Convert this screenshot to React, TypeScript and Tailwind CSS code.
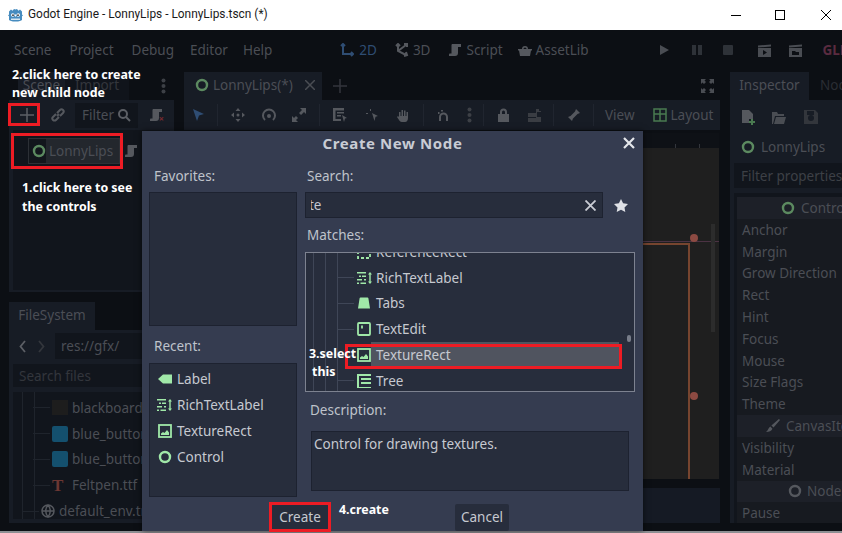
import type { ReactNode } from 'react'

const GREEN = '#a0e8a8'

function ScriptIcon({ className = '', color = '#55585e' }: { className?: string; color?: string }) {
  return (
    <svg className={className} width="14" height="14" viewBox="0 0 14 14" fill={color}>
      <path d="M4 1h9v3h-3v6c0 2-1 3-3 3H1v-1.500c0-.5.5-1 1-1h1.500V3C3.500 2 3.500 1.500 4 1z" />
    </svg>
  )
}

function ControlIcon({ color = '#5c8a60', size = 14 }: { color?: string; size?: number }) {
  return (
    <svg width={size} height={size} viewBox="0 0 14 14" fill="none" stroke={color} strokeWidth="2.400">
      <circle cx="7" cy="7" r="5" />
    </svg>
  )
}

function LabelIcon() {
  return (
    <svg width="14" height="14" viewBox="0 0 14 14" fill={GREEN}>
      <path d="M5 2.500h9v9H5L0 7z" />
    </svg>
  )
}

function RichTextIcon() {
  return (
    <svg width="15" height="14" viewBox="0 0 15 14" fill={GREEN}>
      <path d="M0 1h9v1.500H0zM2 4.500h2V6H2zM5 4.500h4V6H5zM0 8h5v1.500H0zM7 8h2v1.500H7zM0 11.500h2V13H0zM3.500 11.500H9V13H3.500z" />
      <path d="M13 1l2 2.500h-1.300v7H15L13 13l-2-2.500h1.300v-7H11z" />
    </svg>
  )
}

function TextureIcon() {
  return (
    <svg width="14" height="14" viewBox="0 0 14 14">
      <rect x="1" y="1" width="12" height="12" fill="none" stroke={GREEN} strokeWidth="1.800" />
      <path d="M3 11V9.500l2-1.500 1.500 1 2.500-3 2 2.500V11z" fill={GREEN} />
    </svg>
  )
}

function TabsIcon() {
  return (
    <svg width="14" height="14" viewBox="0 0 14 14" fill={GREEN}>
      <path d="M3.500 1.500h7c.5 0 .8.300.9.800L13 12.500H1l1.600-10.200c.1-.5.400-.8.900-.8z" />
    </svg>
  )
}

function TextEditIcon() {
  return (
    <svg width="14" height="14" viewBox="0 0 14 14" fill="none" stroke={GREEN} strokeWidth="1.800">
      <rect x="1" y="1" width="12" height="12" rx="1" />
      <path d="M5 3.500v3" />
    </svg>
  )
}

function TreeIcon() {
  return (
    <svg width="14" height="14" viewBox="0 0 14 14" fill={GREEN}>
      <path d="M0 0h14v2H2v11h12v1H0z" />
      <path d="M4 4h10v2H4zM4 8h10v2H4z" />
    </svg>
  )
}

function RefRectIcon() {
  return (
    <svg width="14" height="14" viewBox="0 0 14 14" fill="none" stroke={GREEN} strokeWidth="1.800" strokeDasharray="3 2">
      <rect x="1" y="1" width="12" height="12" />
    </svg>
  )
}

function GodotLogo() {
  return (
    <svg width="15" height="15" viewBox="0 0 15 15">
      <path d="M3 1.500l1.500 1.200L6 1l1.500.5L9 1l1.500 1.700L12 1.500l2 2v3l1 1-1 .8v3.700c-1 .8-2.500 1.500-6.500 1.500S2 12.800 1 12V8.300L0 7.500l1-1v-3z" fill="#478cbf" />
      <circle cx="4.800" cy="7" r="1.800" fill="#fff" />
      <circle cx="10.200" cy="7" r="1.800" fill="#fff" />
      <circle cx="5" cy="7.200" r="0.900" fill="#333" />
      <circle cx="10" cy="7.200" r="0.900" fill="#333" />
      <rect x="7" y="6.500" width="1" height="2" fill="#fff" />
      <path d="M3 10.500h9v1.500H3z" fill="#d5e6f2" />
    </svg>
  )
}

function MenuLabel({ children, className = '' }: { children: ReactNode; className?: string }) {
  return <span className={`text-[13.500px] text-[#4b4e55] ${className}`}>{children}</span>
}

function ToolbarSep() {
  return <div className="h-[22px] w-px bg-[#20252f]" />
}

function AddNote({ children, className }: { children: ReactNode; className: string }) {
  return <div className={`absolute text-[12.400px] font-bold text-white ${className}`}>{children}</div>
}

function RedBox({ className }: { className: string }) {
  return <div className={`pointer-events-none absolute border-[3px] border-[#ed1c24] ${className}`} />
}

function TitleBar() {
  return (
    <div className="flex h-[30px] items-center bg-white pl-[8px] text-[#1a1a1a]">
      <GodotLogo />
      <span className="ml-[5px] font-['Roboto'] text-[11.900px]">Godot Engine - LonnyLips - LonnyLips.tscn (*)</span>
      <div className="ml-auto flex items-center">
        <div className="h-px w-[10px] bg-black" />
        <div className="ml-[34px] h-[10px] w-[10px] border border-black" />
        <svg className="ml-[36px] mr-[11px]" width="10" height="10" viewBox="0 0 10 10" stroke="#000" strokeWidth="1">
          <path d="M0 0l10 10M10 0L0 10" />
        </svg>
      </div>
    </div>
  )
}

function MenuBar() {
  return (
    <div className="flex h-[42px] w-[900px] items-center pb-[2px] pl-[14px]">
      <MenuLabel>Scene</MenuLabel>
      <MenuLabel className="ml-[18px]">Project</MenuLabel>
      <MenuLabel className="ml-[18px]">Debug</MenuLabel>
      <MenuLabel className="ml-[16px]">Editor</MenuLabel>
      <MenuLabel className="ml-[15px]">Help</MenuLabel>

      <svg className="ml-[68px]" width="14" height="14" viewBox="0 0 14 14" fill="none" stroke="#2f4d73" strokeWidth="2">
        <path d="M3 1v10h10M1 3l2-2 2 2M11 9l2 2-2 2" />
      </svg>
      <MenuLabel className="ml-[5px] !text-[#2f4d73]">2D</MenuLabel>
      <svg className="ml-[18px]" width="14" height="14" viewBox="0 0 14 14" fill="none" stroke="#55585e" strokeWidth="2">
        <path d="M3 1v7l8 4M1 3l2-2 2 2M3 8l8-6M9 1h3v3M9 13l3-1-1-3" />
      </svg>
      <MenuLabel className="ml-[4px]">3D</MenuLabel>
      <ScriptIcon className="ml-[18px]" />
      <MenuLabel className="ml-[4px]">Script</MenuLabel>
      <svg className="ml-[15px]" width="14" height="14" viewBox="0 0 14 14" fill="#55585e">
        <path d="M0 6h14v1.500h-1L12 13H2L1 7.500H0zM4 6a3 3 0 0 1 6 0H8.500a1.500 1.500 0 0 0-3 0z" />
      </svg>
      <MenuLabel className="ml-[4px]">AssetLib</MenuLabel>

      <svg className="ml-[71px]" width="9" height="10" viewBox="0 0 9 10" fill="#4a4d53">
        <path d="M0 0l9 5-9 5z" />
      </svg>
      <svg className="ml-[23px]" width="10" height="10" viewBox="0 0 10 10" fill="#2e3238">
        <path d="M0 0h4v10H0zM6 0h4v10H6z" />
      </svg>
      <div className="ml-[21px] h-[10px] w-[10px] rounded-[1px] bg-[#2e3238]" />
      <svg className="ml-[24px]" width="14" height="13" viewBox="0 0 14 13" fill="#4a4d53">
        <path d="M1 4h13v9H1zM1 1.500l13-1v2l-13 1z" />
        <path d="M6 6l4 2.500L6 11z" fill="#0c0f14" />
      </svg>
      <svg className="ml-[17px]" width="14" height="13" viewBox="0 0 14 13" fill="#4a4d53">
        <path d="M1 4h13v9H1zM1 1.500l13-1v2l-13 1z" />
        <path d="M4 7h3l1 1h3v3H4z" fill="#0c0f14" />
      </svg>
      <span className="ml-[21px] whitespace-nowrap text-[13.500px] font-bold text-[#5a2b40]">GLES3</span>
    </div>
  )
}

function FileRow({ name, icon, className }: { name: string; icon: ReactNode; className: string }) {
  return (
    <div className={`flex h-[25.800px] items-center whitespace-nowrap ${className}`}>
      <div className="-ml-[19px] mr-[2px] h-px w-[17px] bg-[#1f242c]" />
      {icon}
      <MenuLabel className="ml-[4px]">{name}</MenuLabel>
    </div>
  )
}

function LeftDock() {
  return (
    <div className="ml-[9px] flex w-[165px] shrink-0 flex-col">
      <div className="flex h-[28px] items-end pl-[9px]">
        <div className="flex h-[28px] w-[47px] items-center justify-center bg-[#171c25] pb-[2px]">
          <MenuLabel>Scene</MenuLabel>
        </div>
        <div className="flex h-[28px] w-[64px] items-center justify-center bg-[#10141b] pb-[2px]">
          <MenuLabel className="!text-[#33363c]">Import</MenuLabel>
        </div>
        <svg className="mb-[6px] ml-[32px]" width="5" height="16" viewBox="0 0 5 16" fill="#3d4046">
          <circle cx="2.500" cy="2.500" r="2" />
          <circle cx="2.500" cy="8" r="2" />
          <circle cx="2.500" cy="13.500" r="2" />
        </svg>
      </div>
      <div className="flex h-[192px] flex-col bg-[#171c25]">
        <div className="flex h-[30px] items-center pl-[11px]">
          <svg width="14" height="14" viewBox="0 0 14 14" stroke="#5c5f65" strokeWidth="1.500">
            <path d="M7 0v14M0 7h14" />
          </svg>
          <svg className="ml-[17px]" width="14" height="14" viewBox="0 0 14 14" fill="none" stroke="#55585e" strokeWidth="2">
            <path d="M6 8l2-2M5 6L2 9a2 2 0 0 0 3 3l3-3M9 8l3-3a2 2 0 0 0-3-3L6 5" />
          </svg>
          <div className="ml-[10px] flex h-[25px] w-[63px] items-center bg-[#11151c] pl-[7px]">
            <MenuLabel>Filter</MenuLabel>
            <svg className="ml-[3px]" width="14" height="14" viewBox="0 0 14 14" fill="none" stroke="#5c5f65" strokeWidth="2">
              <circle cx="6" cy="6" r="4" />
              <path d="M9 9l4 4" />
            </svg>
          </div>
          <div className="relative ml-[11px]">
            <ScriptIcon />
            <div className="absolute bottom-0 right-[-1px] text-[9px] font-bold leading-[7px] text-[#7c2a30]">×</div>
          </div>
        </div>
        <div className="mx-[4px] mb-[2px] flex-1 bg-[#11151c] pl-[15px] pt-[8px]">
          <div className="flex w-[120px] items-center">
            <div className="flex h-[26px] w-[92px] items-center border border-[#2c3036] bg-[#23272d]">
              <div className="flex h-full w-[17px] items-center justify-center bg-[#12161c] pl-[2px]">
                <ControlIcon />
              </div>
              <MenuLabel className="ml-[3px]">LonnyLips</MenuLabel>
            </div>
            <ScriptIcon className="ml-[4px]" />
          </div>
        </div>
      </div>
      <div className="h-[10px]" />
      <div className="flex h-[28px] w-[86px] items-center justify-center bg-[#171c25] pb-[2px]">
        <MenuLabel>FileSystem</MenuLabel>
      </div>
      <div className="flex h-[193px] flex-col bg-[#171c25] px-[4px]">
        <div className="mt-[3px] flex h-[26px] items-center">
          <svg className="ml-[6px]" width="7" height="13" viewBox="0 0 7 13" fill="none" stroke="#5c5f65" strokeWidth="1.800">
            <path d="M6 1L1.500 6.500 6 12" />
          </svg>
          <svg className="ml-[12px]" width="7" height="13" viewBox="0 0 7 13" fill="none" stroke="#33363c" strokeWidth="1.800">
            <path d="M1 1l4.500 5.500L1 12" />
          </svg>
          <div className="ml-[10px] flex h-[26px] flex-1 items-center bg-[#11151c] pl-[6px]">
            <MenuLabel>res://gfx/</MenuLabel>
          </div>
        </div>
        <div className="mt-[5px] flex h-[23px] items-center bg-[#11151c] pl-[6px] pt-[1px]">
          <MenuLabel className="!text-[#33363c]">Search files</MenuLabel>
        </div>
        <div className="relative mt-[5px] h-[127px] overflow-hidden bg-[#11151c]">
          <div className="absolute left-[9px] top-0 h-full w-px bg-[#1f242c]" />
          <div className="absolute left-[21px] top-0 h-full w-px bg-[#1f242c]" />
          <FileRow name="blackboard" className="ml-[39px] mt-[3px]" icon={<div className="h-[15px] w-[16px] bg-[#1d1d1d]" />} />
          <FileRow name="blue_button" className="ml-[39px]" icon={<div className="h-[16px] w-[16px] rounded-[2px] bg-[#14506e]" />} />
          <FileRow name="blue_button" className="ml-[39px]" icon={<div className="h-[16px] w-[16px] rounded-[2px] bg-[#14506e]" />} />
          <FileRow
            name="Feltpen.ttf"
            className="ml-[39px]"
            icon={<span className="w-[16px] font-['Liberation_Serif'] text-[17px] font-bold leading-none text-[#6d3733]">T</span>}
          />
          <FileRow
            name="default_env.tres"
            className="ml-[28px]"
            icon={
              <svg width="14" height="14" viewBox="0 0 14 14" fill="none" stroke="#55585e" strokeWidth="1.500">
                <circle cx="7" cy="7" r="6" />
                <path d="M1 7h12M7 1c-3 3.500-3 8.500 0 12M7 1c3 3.500 3 8.500 0 12" />
              </svg>
            }
          />
        </div>
      </div>
    </div>
  )
}

function CenterPanel() {
  return (
    <div className="ml-[10px] flex w-[536px] shrink-0 flex-col">
      <div className="flex h-[28px] items-center">
        <div className="flex h-[28px] w-[138px] items-center bg-[#171c25] pb-[2px] pl-[11px]">
          <ControlIcon />
          <MenuLabel className="ml-[4px]">LonnyLips(*)</MenuLabel>
          <svg className="ml-auto mr-[7px]" width="10" height="10" viewBox="0 0 10 10" stroke="#4a4d53" strokeWidth="1.500">
            <path d="M0 0l10 10M10 0L0 10" />
          </svg>
        </div>
        <svg className="ml-[11px]" width="14" height="14" viewBox="0 0 14 14" stroke="#33363c" strokeWidth="1.500">
          <path d="M7 0v14M0 7h14" />
        </svg>
        <svg className="ml-auto mr-[6px]" width="13" height="14" viewBox="0 0 13 14" fill="#4a4d53">
          <path d="M0 0h5L3.500 1.500 5 3 3 5 1.500 3.500 0 5zM13 0v5l-1.500-1.500L10 5 8 3l1.500-1.500L8 0zM0 14V9l1.500 1.500L3 9l2 2-1.500 1.500L5 14zM13 14H8l1.500-1.500L8 11l2-2 1.500 1.500L13 9z" />
        </svg>
      </div>
      <div className="flex h-[30px] items-center bg-[#171c25] pl-[7px]">
        <svg width="14" height="14" viewBox="0 0 14 14" fill="#2f4d73">
          <path d="M2 1l11 5-5 1.500L6 13z" />
        </svg>
        <div className="ml-[12px]"><ToolbarSep /></div>
        <svg className="ml-[13px]" width="14" height="14" viewBox="0 0 14 14" fill="#55585e">
          <path d="M7 0l2.500 3h-5zM7 14l-2.500-3h5zM0 7l3-2.500v5zM14 7l-3 2.500v-5z" />
          <circle cx="7" cy="7" r="1.500" />
        </svg>
        <svg className="ml-[17px]" width="14" height="14" viewBox="0 0 14 14" fill="none" stroke="#55585e" strokeWidth="2">
          <path d="M3 12A6 6 0 1 1 11 12" />
          <circle cx="7" cy="8" r="1" />
        </svg>
        <svg className="ml-[16px]" width="14" height="14" viewBox="0 0 14 14" fill="#55585e">
          <path d="M8 0h6v6l-2-2-3 3-2-2 3-3zM0 14V8l2 2 2-2 2 2-2 2 2 2z" />
        </svg>
        <div className="ml-[13px]"><ToolbarSep /></div>
        <svg className="ml-[13px]" width="14" height="14" viewBox="0 0 14 14" fill="#55585e">
          <path d="M0 0h11v2.500H2.500V11H8v2H0zM4 4h7v1.500H4zM4 7h4v1.500H4z" />
          <path d="M9 7l5 3-2 .5L11 14z" />
        </svg>
        <svg className="ml-[18px]" width="14" height="14" viewBox="0 0 14 14" fill="#55585e">
          <path d="M1 5h2v1H1zM5 1h1v2H5zM2 1.500l1 1M7 5l6 3-2.500.8L9.500 13z" />
        </svg>
        <svg className="ml-[17px]" width="14" height="14" viewBox="0 0 14 14" fill="#55585e">
          <path d="M3 4h1.500v4H5.500V2H7v6h1V2.500h1.500V8h1V4H12v6c0 2-1 4-3 4H6c-2 0-3-2-5-5l1-1 1 1z" />
        </svg>
        <div className="ml-[13px]"><ToolbarSep /></div>
        <svg className="ml-[13px]" width="13" height="13" viewBox="0 0 13 13" fill="none" stroke="#55585e" strokeWidth="2">
          <path d="M3 12V8a3.500 3.500 0 0 1 7 0v4" />
          <path d="M1 4h2M5 1v2" strokeDasharray="1.500 1" />
        </svg>
        <svg className="ml-[17px]" width="5" height="16" viewBox="0 0 5 16" fill="#3d4046">
          <circle cx="2.500" cy="2.500" r="2" />
          <circle cx="2.500" cy="8" r="2" />
          <circle cx="2.500" cy="13.500" r="2" />
        </svg>
        <div className="ml-[11px]"><ToolbarSep /></div>
        <svg className="ml-[13px]" width="13" height="14" viewBox="0 0 13 14" fill="#55585e">
          <path d="M1 6h11v8H1zM3 6V4a3.500 3.500 0 0 1 7 0v2H8V4a1.500 1.500 0 0 0-3 0v2z" />
        </svg>
        <svg className="ml-[18px]" width="13" height="13" viewBox="0 0 13 13" fill="#3a3d43">
          <path d="M0 4h8V0h3v2h2v1H9v5h4v5H0V9h8V8H0z" />
        </svg>
        <div className="ml-[12px]"><ToolbarSep /></div>
        <svg className="ml-[13px]" width="14" height="14" viewBox="0 0 14 14" fill="#55585e">
          <path d="M9 1l4 4-2.500 1-4.500 4.500L5 13 1 9l2.500-1L8 3.500z" />
        </svg>
        <div className="ml-[12px]"><ToolbarSep /></div>
        <MenuLabel className="ml-[11px]">View</MenuLabel>
        <svg className="ml-[18px]" width="14" height="14" viewBox="0 0 14 14" fill="none" stroke="#4a7a50" strokeWidth="1.500">
          <rect x="1" y="1" width="12" height="12" />
          <path d="M7 1v12M1 6h12" />
        </svg>
        <MenuLabel className="ml-[4px]">Layout</MenuLabel>
      </div>
      <div className="flex h-[393px] flex-col bg-[#0c0f14]">
        <div className="relative mr-[1px] mt-[3px] h-[15px] bg-[#0e1116]">
          <div className="absolute bottom-0 right-[43px] h-[4px] w-px bg-[#33363c]" />
          <div className="absolute bottom-0 right-[19px] h-[4px] w-px bg-[#33363c]" />
        </div>
        <div className="relative mr-[1px] h-[331px] bg-[#1f1f1f]">
          <div className="absolute right-0 top-[93px] h-px w-[76px] bg-[#4b3243]" />
          <div className="absolute left-0 right-[30px] top-[95px] h-[2px] bg-[#77452f]" />
          <div className="absolute bottom-0 right-[29px] top-[95px] w-[2px] bg-[#77452f]" />
          <div className="absolute right-[4px] top-[76px] h-[108px] w-[4px] bg-[#2c2c2c]" />
          <div className="absolute right-[21px] top-[86px] h-[8px] w-[8px] rounded-full bg-[#8c4a42]" />
          <div className="absolute right-[21px] top-[244px] h-[8px] w-[8px] rounded-full bg-[#8c4a42]" />
        </div>
        <div className="mt-[9px] h-[35px] bg-[#151a24]" />
      </div>
    </div>
  )
}

const PROPS_A = ['Anchor', 'Margin', 'Grow Direction', 'Rect', 'Hint', 'Focus', 'Mouse', 'Size Flags', 'Theme']
const PROPS_B = ['Visibility', 'Material']

function PropRow({ label }: { label: string }) {
  return (
    <div className="flex h-[21.800px] items-center whitespace-nowrap pl-[5px]">
      <MenuLabel>{label}</MenuLabel>
    </div>
  )
}

function RightDock() {
  return (
    <div className="ml-[10px] flex w-[112px] shrink-0 flex-col">
      <div className="flex h-[28px] items-center">
        <div className="flex h-[28px] w-[79px] shrink-0 items-center justify-center bg-[#171c25] pb-[2px]">
          <MenuLabel>Inspector</MenuLabel>
        </div>
        <MenuLabel className="ml-[11px] pb-[2px] !text-[#2a2d33]">Node</MenuLabel>
      </div>
      <div className="flex h-[423px] flex-col overflow-hidden whitespace-nowrap bg-[#171c25] pl-[4px]">
        <div className="flex h-[34px] shrink-0 items-center pl-[8px]">
          <svg width="13" height="15" viewBox="0 0 13 15" fill="#55585e">
            <path d="M0 0h7l4 4v5H7v4H0z" />
            <path d="M9 9h2v2h2v2h-2v2H9v-2H7v-2h2z" fill="#4a7a50" />
          </svg>
          <svg className="ml-[17px]" width="14" height="13" viewBox="0 0 14 13" fill="#4a4d53">
            <path d="M0 1h5l1 2h6v2H3L1 13H0zM4 6h10l-2 7H2z" />
          </svg>
          <svg className="ml-[18px]" width="14" height="14" viewBox="0 0 14 14" fill="#33363c">
            <path d="M0 0h11l3 3v11H0zM3 1v4h7V1zM4 8a3 3 0 1 0 6 0 3 3 0 1 0-6 0z" />
          </svg>
        </div>
        <div className="flex h-[29px] shrink-0 items-center pb-[3px] pl-[7px]">
          <ControlIcon />
          <MenuLabel className="ml-[6px]">LonnyLips</MenuLabel>
        </div>
        <div className="flex h-[25px] shrink-0 items-center bg-[#11151c] pl-[7px] pt-[1px]">
          <MenuLabel className="!text-[#3d4046]">Filter properties</MenuLabel>
        </div>
        <div className="mt-[5px] flex-1 bg-[#11151c] pl-[3px] pt-[4px]">
          <div className="flex h-[22px] items-center bg-[#1d2028] pl-[44px]">
            <ControlIcon />
            <MenuLabel className="ml-[6px]">Control</MenuLabel>
          </div>
          <div className="bg-[#171a20]">
            {PROPS_A.map((p) => (
              <PropRow key={p} label={p} />
            ))}
            <div className="flex h-[22px] items-center bg-[#1d2028] pl-[29px]">
              <svg width="14" height="14" viewBox="0 0 13 13" fill="#55585e">
                <path d="M12 0l1 1-6 7-2-2zM4 7l2 2c-1 2-3 3-6 3 2-1 2-4 4-5z" />
              </svg>
              <MenuLabel className="ml-[6px]">CanvasItem</MenuLabel>
            </div>
            {PROPS_B.map((p) => (
              <PropRow key={p} label={p} />
            ))}
            <div className="flex h-[21px] items-center bg-[#1d2028] pl-[51px]">
              <ControlIcon color="#55585e" />
              <MenuLabel className="ml-[5px]">Node</MenuLabel>
            </div>
            <PropRow label="Pause" />
          </div>
        </div>
      </div>
    </div>
  )
}

function DialogLabel({ children, className = '' }: { children: ReactNode; className?: string }) {
  return <div className={`flex h-[17px] items-center text-[13.500px] text-[#bfc3cb] ${className}`}>{children}</div>
}

function ListRow({ icon, label }: { icon: ReactNode; label: string }) {
  return (
    <div className="flex h-[26px] items-center text-[13.500px] text-[#c6c9d0]">
      <div className="flex w-[15px] justify-center">{icon}</div>
      <span className="ml-[5px]">{label}</span>
    </div>
  )
}

function MatchRow({ icon, label, selected }: { icon: ReactNode; label: string; selected?: boolean }) {
  return (
    <div className="flex h-[25.800px] items-center">
      <div className="mr-[3px] h-px w-[16px] bg-[#3f4657]" />
      <div className="flex w-[14px] justify-center">{icon}</div>
      <div className={`flex h-full flex-1 items-center pl-[5px] text-[13.500px] text-[#c6c9d0] ${selected ? 'bg-[#50545f]' : ''}`}>
        {label}
      </div>
    </div>
  )
}

function CreateDialog() {
  return (
    <div className="absolute left-[142px] top-[131px] flex h-[400px] w-[501px] flex-col bg-[#353c50] shadow-[0_0_6px_rgba(0,0,0,0.6)]">
      <div className="relative flex h-[25px] items-center justify-center text-[15px] font-bold tracking-[0.6px] text-[#c9ccd4]">
        Create New Node
        <svg className="absolute right-[8px] top-[6px]" width="12" height="12" viewBox="0 0 12 12" stroke="#e4e6ea" strokeWidth="2.200">
          <path d="M1 1l10 10M11 1L1 11" />
        </svg>
      </div>
      <div className="flex flex-1 pl-[7px]">
        <div className="flex w-[148px] flex-col">
          <DialogLabel className="mt-[12px] pl-[5px]">Favorites:</DialogLabel>
          <div className="mt-[7px] h-[134px] border border-[#1d2230] bg-[#272d3c]" />
          <DialogLabel className="mt-[12px] pl-[5px]">Recent:</DialogLabel>
          <div className="mt-[8px] flex h-[134px] flex-col border border-[#1d2230] bg-[#272d3c] pl-[7px] pt-[2px]">
            <ListRow icon={<LabelIcon />} label="Label" />
            <ListRow icon={<RichTextIcon />} label="RichTextLabel" />
            <ListRow icon={<TextureIcon />} label="TextureRect" />
            <ListRow icon={<ControlIcon color={GREEN} />} label="Control" />
          </div>
        </div>
        <div className="ml-[8px] flex w-[330px] flex-col">
          <DialogLabel className="mt-[12px] pl-[2px]">Search:</DialogLabel>
          <div className="mt-[7px] flex h-[26px] items-center">
            <div className="flex h-full w-[298px] items-center justify-between border border-[#1d2230] bg-[#272d3c] pl-[5px] pr-[6px] text-[13.500px] text-[#c6c9d0]">
              <div className="overflow-hidden"><span className="-ml-[2px] block">te</span></div>
              <svg width="11" height="11" viewBox="0 0 11 11" stroke="#c9ccd4" strokeWidth="1.800">
                <path d="M0.500 0.500l10 10M10.500 0.500l-10 10" />
              </svg>
            </div>
            <svg className="ml-[11px]" width="14" height="13" viewBox="0 0 14 13" fill="#dfe1e6">
              <path d="M7 0l2.100 4.300 4.900.7-3.500 3.400.8 4.600L7 10.800 2.700 13l.8-4.600L0 5l4.900-.7z" />
            </svg>
          </div>
          <DialogLabel className="mt-[9px] pl-[2px]">Matches:</DialogLabel>
          <div className="relative mt-[8px] h-[140px] overflow-hidden border border-[#7d8290] bg-[#272d3c] pl-[32px]">
            <div className="absolute bottom-0 left-[7px] top-0 w-px bg-[#3f4657]" />
            <div className="absolute bottom-0 left-[19px] top-0 w-px bg-[#3f4657]" />
            <div className="absolute bottom-0 left-[31px] top-0 w-px bg-[#3f4657]" />
            <div className="-mt-[14px] mr-[15px]">
              <MatchRow icon={<RefRectIcon />} label="ReferenceRect" />
              <MatchRow icon={<RichTextIcon />} label="RichTextLabel" />
              <MatchRow icon={<TabsIcon />} label="Tabs" />
              <MatchRow icon={<TextEditIcon />} label="TextEdit" />
              <MatchRow icon={<TextureIcon />} label="TextureRect" selected />
              <MatchRow icon={<TreeIcon />} label="Tree" />
            </div>
            <div className="absolute right-[3px] top-[82px] h-[7px] w-[4px] rounded-[2px] bg-[#777c89]" />
          </div>
          <DialogLabel className="mt-[10px] pl-[5px]">Description:</DialogLabel>
          <div className="ml-[6px] mt-[12px] h-[60px] w-[318px] border border-[#1d2230] bg-[#272d3c] pl-[2px] pt-[2px] text-[13.500px] text-[#c6c9d0]">
            Control for drawing textures.
          </div>
        </div>
      </div>
      <div className="flex h-[29px] items-start pl-[130px] pt-[2px]">
        <div className="flex h-[27px] w-[56px] items-center justify-center rounded-[2px] bg-[#272d3c] text-[13.500px] text-[#c6c9d0]">Create</div>
        <div className="ml-[127px] flex h-[27px] w-[54px] items-center justify-center rounded-[2px] bg-[#272d3c] text-[13.500px] text-[#c6c9d0]">Cancel</div>
      </div>
    </div>
  )
}

export default function App() {
  return (
    <div className="relative h-[533px] w-[842px] overflow-hidden bg-white font-['Noto_Sans',sans-serif] [&_svg]:shrink-0">
      <TitleBar />
      <div className="h-[501px] overflow-hidden bg-[#0c0f14]">
        <MenuBar />
        <div className="flex">
          <LeftDock />
          <CenterPanel />
          <RightDock />
        </div>
      </div>
      <div className="h-[2px] bg-[#8d8f93]" />

      <CreateDialog />

      <RedBox className="left-[8px] top-[103px] h-[23px] w-[32px]" />
      <RedBox className="left-[11px] top-[133px] h-[36px] w-[112px]" />
      <RedBox className="left-[345px] top-[344px] h-[25px] w-[277px]" />
      <RedBox className="left-[269px] top-[502px] h-[30px] w-[62px]" />

      <AddNote className="left-[12px] top-[66px] leading-[18px]">
        2.click here to create
        <br />
        new child node
      </AddNote>
      <AddNote className="left-[22px] top-[178px] leading-[19px]">
        1.click here to see
        <br />
        the controls
      </AddNote>
      <AddNote className="left-[309px] top-[345px] leading-[18px]">
        3.select
        <br />
        <span className="ml-[3px]">this</span>
      </AddNote>
      <AddNote className="left-[339px] top-[501px] leading-[18px]">4.create</AddNote>
    </div>
  )
}
